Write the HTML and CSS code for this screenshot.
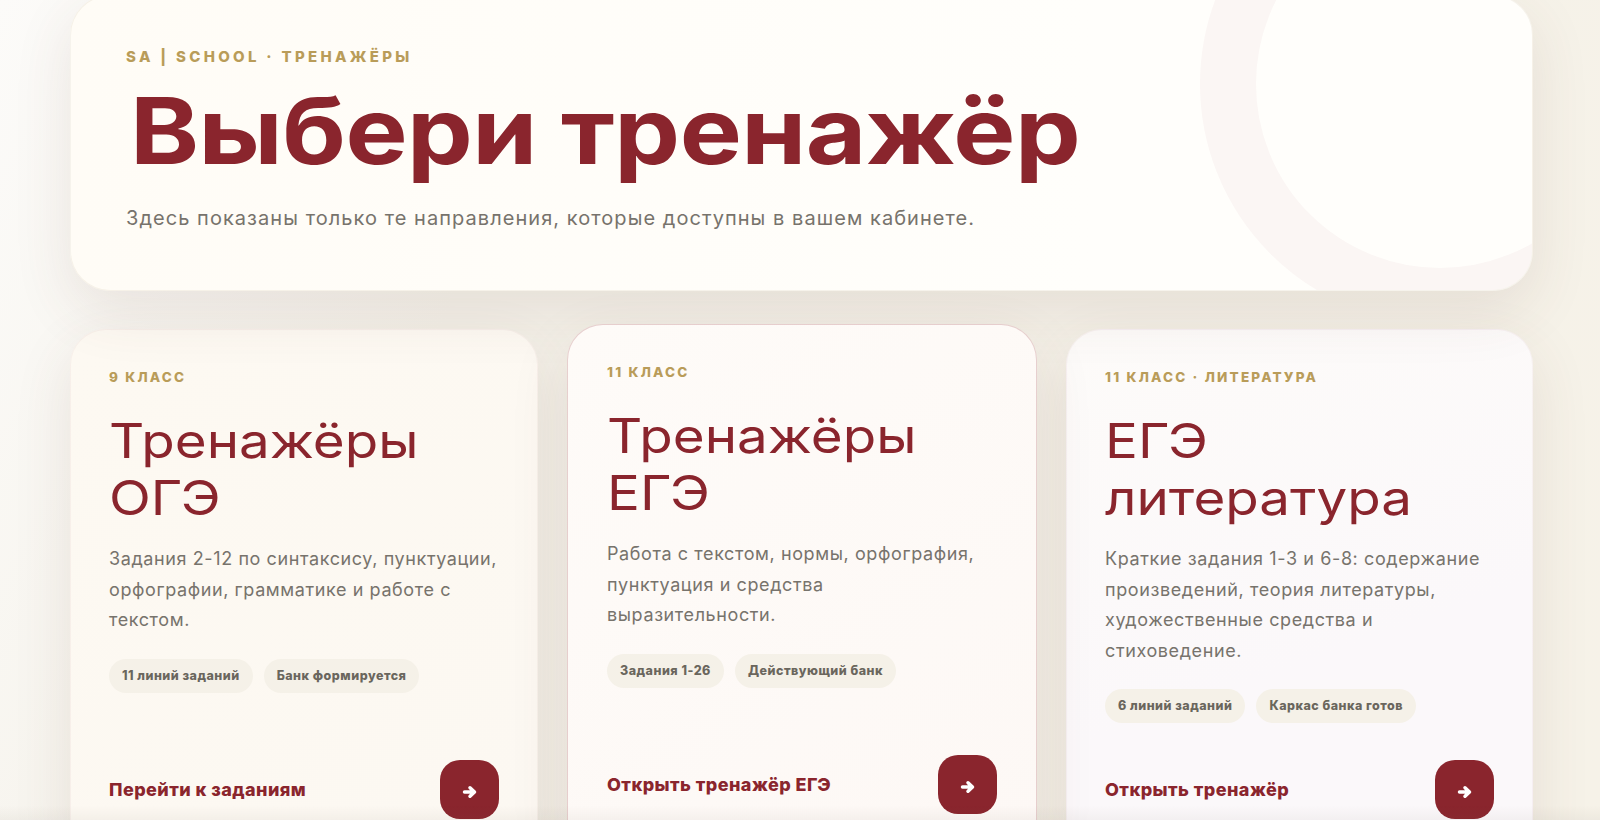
FILE: index.html
```html
<!DOCTYPE html>
<html lang="ru">
<head>
<meta charset="utf-8">
<title>Выбери тренажёр</title>
<link rel="stylesheet" href="styles.css">
</head>
<body>
<main class="page">
  <header class="hero">
    <span class="hero-ring"></span>
    <p class="hero-label">SA | SCHOOL · ТРЕНАЖЁРЫ</p>
    <h1 class="hero-title">Выбери тренажёр</h1>
    <p class="hero-sub">Здесь показаны только те направления, которые доступны в вашем кабинете.</p>
  </header>
  <section class="cards">
    <article class="card card-warm">
      <p class="card-label">9 КЛАСС</p>
      <h2 class="card-title">Тренажёры<br>ОГЭ</h2>
      <p class="card-text">Задания 2-12 по синтаксису, пунктуации, орфографии, грамматике и работе с текстом.</p>
      <div class="pills"><span class="pill">11 линий заданий</span><span class="pill">Банк формируется</span></div>
      <div class="card-foot"><span class="card-link">Перейти к заданиям</span><span class="arrow-btn"><svg class="arrow" viewBox="0 0 16 14"><path d="M2.500 7H12M8 2.800 12.500 7 8 11.200"/></svg></span></div>
    </article>
    <article class="card card-main">
      <p class="card-label">11 КЛАСС</p>
      <h2 class="card-title">Тренажёры<br>ЕГЭ</h2>
      <p class="card-text">Работа с текстом, нормы, орфография, пунктуация и средства выразительности.</p>
      <div class="pills"><span class="pill">Задания 1-26</span><span class="pill">Действующий банк</span></div>
      <div class="card-foot"><span class="card-link">Открыть тренажёр ЕГЭ</span><span class="arrow-btn"><svg class="arrow" viewBox="0 0 16 14"><path d="M2.500 7H12M8 2.800 12.500 7 8 11.200"/></svg></span></div>
    </article>
    <article class="card card-cool">
      <p class="card-label">11 КЛАСС · ЛИТЕРАТУРА</p>
      <h2 class="card-title">ЕГЭ<br>литература</h2>
      <p class="card-text">Краткие задания 1-3 и 6-8: содержание произведений, теория литературы, художественные средства и стиховедение.</p>
      <div class="pills"><span class="pill">6 линий заданий</span><span class="pill">Каркас банка готов</span></div>
      <div class="card-foot"><span class="card-link">Открыть тренажёр</span><span class="arrow-btn"><svg class="arrow" viewBox="0 0 16 14"><path d="M2.500 7H12M8 2.800 12.500 7 8 11.200"/></svg></span></div>
    </article>
  </section>
</main>
<div class="bottom-fade"></div>
</body>
</html>
```
FILE: styles.css
```css
* { box-sizing: border-box; }
html, body { height: 100%; margin: 0; overflow: hidden; }
body {
  background: linear-gradient(115deg, #fcfbf9 0%, #f5f2ea 30%, #f6f2e8 100%);
  font-family: Inter, "Noto Sans", sans-serif;
  color: #8a252d;
}
.page { width: 1463px; margin: -5px 0 0 70px; display: flex; flex-direction: column; gap: 38px; }
.hero {
  position: relative;
  height: 296px;
  padding: 51px 55px 0;
  border: 1px solid rgba(170, 150, 110, .1);
  border-radius: 40px;
  overflow: hidden;
  background: linear-gradient(90deg, #fffcf6, #fffefb 70%);
  box-shadow: 0 20px 60px rgba(100, 65, 55, .11);
}
.hero-ring {
  position: absolute;
  left: 1129px;
  top: -152px;
  width: 480px;
  height: 480px;
  border-radius: 50%;
  border: 56px solid rgba(138, 37, 45, .035);
}
.hero-label { margin: 0; font-size: 15px; line-height: 20px; font-weight: 800; letter-spacing: 3.3px; color: #b99c59; }
.hero-title { margin: 12px 0 0 5px; font-size: 92px; line-height: 104px; font-weight: 700; letter-spacing: -.5px; color: #8a252d; white-space: nowrap; transform: scaleX(1.135); transform-origin: 7px 0; }
.hero-sub { margin: 20px 0 0; font-size: 20px; line-height: 30px; font-weight: 400; letter-spacing: 1.05px; color: #77736c; }
.cards { display: grid; grid-template-columns: 468px 470px 467px; gap: 29px; }
.card {
  display: flex;
  flex-direction: column;
  padding: 38px 38px 42px;
  border-radius: 36px;
  border: 1px solid rgba(138, 37, 45, .04);
  box-shadow: 0 20px 60px rgba(100, 65, 55, .11);
}
.card-warm { background: linear-gradient(145deg, #fdf9f2, #fcf8f2); }
.card-main { padding: 38px 39px 42px; background: linear-gradient(145deg, #fefbf8, #fdf8f5); border-color: rgba(138, 37, 45, .2); transform: translateY(-5px); }
.card-cool { background: linear-gradient(160deg, #fdfbf9, #fbf8fa 60%); }
.card-label { margin: 0; font-size: 13.5px; line-height: 18px; font-weight: 800; letter-spacing: 2.2px; color: #b99c59; }
.card-title { margin: 26px 0 0; font-size: 48px; line-height: 57px; font-weight: 400; color: #8a252d; white-space: nowrap; transform: scaleX(1.14); transform-origin: 0 0; }
.card-text { margin: 18px 0 0; font-size: 18px; line-height: 30.500px; font-weight: 400; letter-spacing: .6px; color: #77736c; }
.pills { display: flex; gap: 11px; margin-top: 23px; }
.pill { height: 34px; padding: 0 13px; border-radius: 17px; background: #f5f1e8; font-size: 12.5px; line-height: 34px; font-weight: 800; letter-spacing: .5px; color: #6a665d; white-space: nowrap; }
.card-foot { display: flex; justify-content: space-between; align-items: center; margin-top: auto; padding-top: 37px; }
.card-link { font-size: 18px; font-weight: 800; letter-spacing: .45px; color: #8a252d; }
.arrow-btn { flex: none; width: 59px; height: 59px; border-radius: 20px; background: #8a252d; display: flex; align-items: center; justify-content: center; }
.arrow { width: 16px; height: 14px; margin-top: 4px; fill: none; stroke: #fff; stroke-width: 3.500; stroke-linecap: round; stroke-linejoin: round; }
.bottom-fade { position: fixed; left: 0; right: 0; bottom: 0; height: 14px; background: linear-gradient(180deg, rgba(110, 95, 85, 0), rgba(110, 95, 85, .06)); pointer-events: none; }
```
